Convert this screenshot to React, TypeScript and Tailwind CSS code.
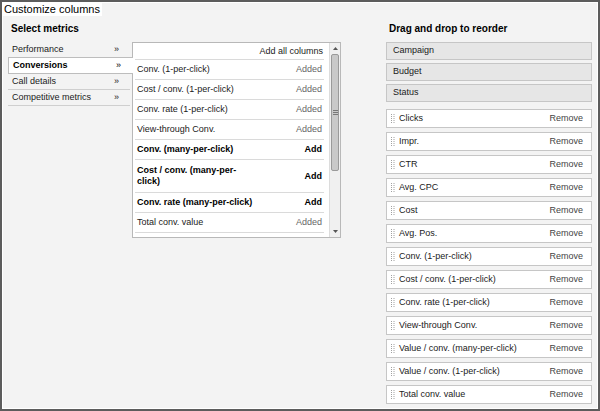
import React from "react";

type Metric = { name: string; status: "Added" | "Add" };

const NAV = [
  { label: "Performance", active: false },
  { label: "Conversions", active: true },
  { label: "Call details", active: false },
  { label: "Competitive metrics", active: false },
];

const METRICS: Metric[] = [
  { name: "Conv. (1-per-click)", status: "Added" },
  { name: "Cost / conv. (1-per-click)", status: "Added" },
  { name: "Conv. rate (1-per-click)", status: "Added" },
  { name: "View-through Conv.", status: "Added" },
  { name: "Conv. (many-per-click)", status: "Add" },
  { name: "Cost / conv. (many-per-click)", status: "Add" },
  { name: "Conv. rate (many-per-click)", status: "Add" },
  { name: "Total conv. value", status: "Added" },
];

const FIXED = ["Campaign", "Budget", "Status"];

const COLUMNS = [
  "Clicks",
  "Impr.",
  "CTR",
  "Avg. CPC",
  "Cost",
  "Avg. Pos.",
  "Conv. (1-per-click)",
  "Cost / conv. (1-per-click)",
  "Conv. rate (1-per-click)",
  "View-through Conv.",
  "Value / conv. (many-per-click)",
  "Value / conv. (1-per-click)",
  "Total conv. value",
];

const Grip = () => (
  <svg width="4" height="9" viewBox="0 0 4 9" className="shrink-0">
    {[0, 2, 4, 6, 8].map((y) => (
      <g key={y} fill="#a0a0a0">
        <rect x="0" y={y} width="1" height="1" />
        <rect x="2.5" y={y} width="1" height="1" />
      </g>
    ))}
  </svg>
);

const Scrollbar = () => (
  <div className="w-[11px] shrink-0 flex flex-col bg-[#f0f0f0] border-l border-[#dcdcdc]">
    <div className="h-[11px] flex items-center justify-center">
      <svg width="5" height="3" viewBox="0 0 5 3">
        <path d="M0 3 L2.5 0 L5 3 Z" fill="#555" />
      </svg>
    </div>
    <div className="mx-px h-[117px] rounded-[2px] border border-[#9a9a9a] bg-[#c9c9c9] flex items-center justify-center">
      <div className="flex flex-col gap-px">
        <div className="w-[5px] h-px bg-[#777]" />
        <div className="w-[5px] h-px bg-[#777]" />
        <div className="w-[5px] h-px bg-[#777]" />
      </div>
    </div>
    <div className="flex-1" />
    <div className="h-[11px] flex items-center justify-center">
      <svg width="5" height="3" viewBox="0 0 5 3">
        <path d="M0 0 L2.5 3 L5 0 Z" fill="#555" />
      </svg>
    </div>
  </div>
);

export default function App() {
  return (
    <div className="relative w-[600px] h-[411px] border-2 border-[#5c5c5c] bg-white p-px font-['Liberation_Sans',Arial,sans-serif] text-[#1a1a1a] overflow-hidden">
      <div className="absolute left-0 top-0 h-[14px] pl-[2px] pr-[2px] bg-white text-[11px] leading-[14px] text-black">
        Customize columns
      </div>

      <div className="h-full bg-[#f3f3f3] pt-[19px] pl-[5px] flex gap-[45px]">
        {/* select metrics */}
        <div className="w-[333px] shrink-0">
          <div className="h-[20px] pl-[3px] text-[10px] font-bold leading-[14px] text-black">
            Select metrics
          </div>
          <div className="flex items-start">
            <div className="w-[124px] shrink-0 text-[9px]">
              {NAV.map((item) =>
                item.active ? (
                  <div
                    key={item.label}
                    className="relative z-10 -mt-px -mr-px h-[17px] flex items-center justify-between pl-[4px] pr-[12px] bg-white border border-r-0 border-[#bdbdbd] text-black"
                  >
                    <span className="font-bold">{item.label}</span>
                    <span>»</span>
                  </div>
                ) : (
                  <div
                    key={item.label}
                    className="h-[16px] mr-[2px] flex items-center justify-between pl-[4px] pr-[11px] border-b border-[#cfcfcf]"
                  >
                    <span>{item.label}</span>
                    <span>»</span>
                  </div>
                )
              )}
            </div>

            <div className="w-[209px] h-[196px] shrink-0 border border-[#b8b8b8] bg-white flex overflow-hidden">
              <div className="flex-1 pl-[2px] pr-[5px] text-[9px] leading-[11px] overflow-hidden">
                <div className="h-[17px] flex items-center justify-end pr-[1px] border-b border-[#dadada]">
                  Add all columns
                </div>
                {METRICS.map((m) => {
                  const bold = m.status === "Add";
                  const twoLine = m.name.length > 27;
                  return (
                    <div
                      key={m.name}
                      className={`flex items-center justify-between px-[2px] border-b border-[#dadada] ${
                        twoLine ? "py-[5px]" : "py-[4px]"
                      } ${bold ? "font-bold text-black" : ""}`}
                    >
                      <span className="w-[122px]">{m.name}</span>
                      <span className={bold ? "" : "text-[#666]"}>{m.status}</span>
                    </div>
                  );
                })}
              </div>
              <Scrollbar />
            </div>
          </div>
        </div>

        {/* reorder */}
        <div className="w-[206px] shrink-0">
          <div className="h-[20px] pl-[3px] text-[10px] font-bold leading-[14px] text-black">
            Drag and drop to reorder
          </div>
          <div className="flex flex-col gap-[3px] text-[9px]">
            {FIXED.map((f) => (
              <div
                key={f}
                className="h-[18px] flex items-center pl-[6px] bg-[#e6e6e6] border border-[#c6c6c6]"
              >
                {f}
              </div>
            ))}
          </div>
          <div className="mt-[7px] flex flex-col gap-[4px] text-[9px]">
            {COLUMNS.map((c) => (
              <div
                key={c}
                className="h-[19px] flex items-center gap-[4px] pl-[4px] pr-[8px] bg-white border border-[#c6c6c6]"
              >
                <Grip />
                <span className="flex-1">{c}</span>
                <span className="text-[#444]">Remove</span>
              </div>
            ))}
          </div>
        </div>
      </div>
    </div>
  );
}
